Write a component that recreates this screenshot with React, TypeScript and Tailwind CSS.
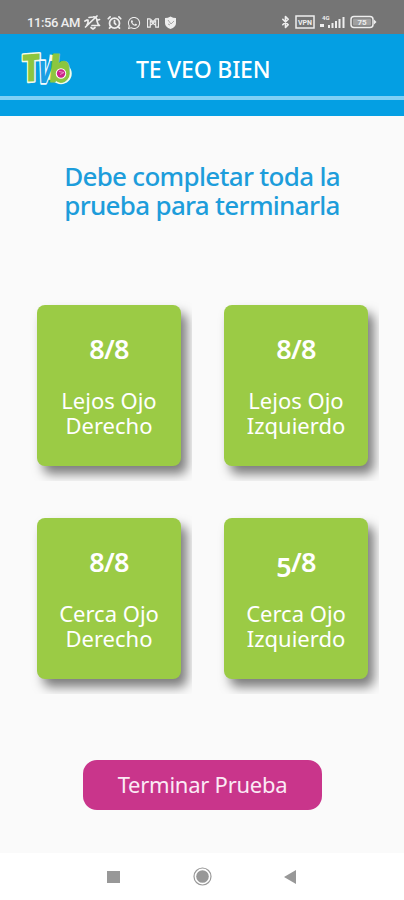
import { AlarmClock, Bluetooth } from "lucide-react";
import { FaWhatsapp } from "react-icons/fa";

type Test = { done: string; total: string; lines: [string, string]; low?: boolean };

const TESTS: Test[] = [
  { done: "8", total: "8", lines: ["Lejos Ojo", "Derecho"] },
  { done: "8", total: "8", lines: ["Lejos Ojo", "Izquierdo"] },
  { done: "8", total: "8", lines: ["Cerca Ojo", "Derecho"] },
  { done: "5", total: "8", lines: ["Cerca Ojo", "Izquierdo"], low: true },
];

function StatusBar() {
  return (
    <div className="flex h-[34px] items-end bg-[#757575] pr-[27px] pb-[4px] pl-[27px] text-[#eeeeee]">
      <span className="mr-[4px] w-[53px] whitespace-nowrap font-[Roboto,sans-serif] text-[13px] leading-[15px] font-medium tracking-[-0.4px]">
        11:56 AM
      </span>
      {/* muted bell */}
      <svg className="mr-[6px] h-[15px] w-[17px]" viewBox="0 0 17 15" fill="none" stroke="currentColor" strokeWidth="1.7" strokeLinecap="round" strokeLinejoin="round">
        <path d="M5 2.500l4-.5c3-.5 4 2 4 4l1 3 1.500 1.500H8M3 10l1-2 0-3M7 12.500l2 1.500 2-1.500M1.500 12L13 1M1 6l2-1M14 5l1.500-.5" />
      </svg>
      <AlarmClock className="mr-[5px] h-[15px] w-[15px]" strokeWidth={2.8} />
      <FaWhatsapp className="mr-[5px] h-[14px] w-[14px]" />
      <svg className="mr-[4px] mb-[2px] h-[10px] w-[14px]" viewBox="0 0 14 11" fill="none" stroke="currentColor" strokeWidth="1.2">
        <path d="M4 1H1v9h3V3l3 3 3-3v7h3V1h-3L7 4 4 1M4 8l3-2 3 2" />
      </svg>
      <svg className="mb-[1px] h-[13px] w-[13px]" viewBox="0 0 13 13">
        <path d="M1 2q3 0 5.500-1.500Q9 2 12 2v5q0 4-5.500 6Q1 11 1 7z" fill="currentColor" />
        <path d="M4 4l3 4 3-3M4 8l2 1" fill="none" stroke="#a8a8a8" />
      </svg>
      <div className="ml-auto flex items-center">
        <Bluetooth className="mr-[3px] h-[16px] w-[13px]" strokeWidth={3} />
        <svg className="mr-[5px] h-[14px] w-[20px]" viewBox="0 0 20 14">
          <rect x="1" y="1" width="18" height="12" fill="none" stroke="currentColor" strokeWidth="1.500" />
          <text x="10" y="9.500" textAnchor="middle" fontFamily="Roboto, sans-serif" fontSize="7" fontWeight="700" fill="currentColor">VPN</text>
        </svg>
        <svg className="mr-[5px] h-[14px] w-[25px]" viewBox="0 0 25 14" fill="currentColor">
          <text x="2" y="5" fontFamily="Roboto, sans-serif" fontSize="6" fontWeight="700">4G</text>
          <path d="M0 9h4v3H0zM8 10h2v3H8zM11.500 8h2v5h-2zM15 6h2v7h-2zM18.500 4h2v9h-2zM22.500 2h2v11h-2z" />
        </svg>
        <svg className="h-[14px] w-[27px]" viewBox="0 0 27 14">
          <rect x="1" y="1.500" width="22" height="11" rx="3" fill="none" stroke="currentColor" strokeWidth="1.500" />
          <rect x="3" y="3.500" width="18" height="7" rx="1" fill="#a0a0a0" />
          <path d="M24 4.500l2.500 2.500-2.500 2.500z" fill="currentColor" />
          <text x="12" y="10" textAnchor="middle" fontFamily="Roboto, sans-serif" fontSize="8" fontWeight="700" fill="currentColor">75</text>
        </svg>
      </div>
    </div>
  );
}

function Logo() {
  return (
    <svg className="h-[40px] w-[56px] overflow-visible" viewBox="0 0 56 40" fontFamily="'Open Sans', sans-serif" fontWeight="800" strokeLinejoin="round">
      {/* pale outline sits under each letter, the fill colour thickens it */}
      <g stroke="#f4fbea" strokeWidth="4.500">
        <circle cx="43" cy="28.500" r="8.500" />
        <path d="M36 10l-3 25" strokeWidth="8.500" />
      </g>
      <text transform="translate(4 37) rotate(-4) skewX(-4) scale(.82 1)" fontSize="38" fill="#8cc63f" stroke="#f4fbea" strokeWidth="3.200" paintOrder="stroke">T</text>
      <text transform="translate(18.500 38) skewX(-10) scale(.66 1)" fontSize="31" fill="#1c9fe3" stroke="#f4fbff" strokeWidth="3.400" paintOrder="stroke">V</text>
      <text transform="translate(30 36.500) skewX(-6) scale(.9 1)" fontSize="37" fill="#8cc63f" stroke="#8cc63f" strokeWidth="0.800">b</text>
      <circle cx="43" cy="28.500" r="7" fill="#fff" stroke="#8cc63f" strokeWidth="3.500" />
      <circle cx="43" cy="28.500" r="4.200" fill="#cc2489" />
      <path d="M41 26.500l5 1-4 2" fill="none" stroke="#f2a5d2" strokeWidth="0.800" />
    </svg>
  );
}

function TestCard({ test }: { test: Test }) {
  return (
    // The wrapper crops the shadow to a square edge
    <div className="h-[184px] w-[163px] overflow-hidden pt-[8px] pl-[8px]">
      <div className="h-[161px] w-[144px] rounded-[8px] bg-[#9bcb45] pt-[26px] pl-px text-center text-white shadow-[6px_8px_11px_rgba(0,0,0,0.5)]">
        <div className="text-[27px] leading-[35px] font-semibold tracking-[-0.8px]">
          <span className={test.low ? "relative top-[5px]" : undefined}>{test.done}</span>/{test.total}
        </div>
        <div className="mt-[22px] text-[22px] leading-[25px]">
          {test.lines[0]}
          <br />
          {test.lines[1]}
        </div>
      </div>
    </div>
  );
}

export default function App() {
  return (
    <div className="flex h-[900px] w-[404px] flex-col overflow-hidden bg-[#fafafa] font-['Noto_Sans',sans-serif]">
      <StatusBar />
      <header className="h-[82px] shrink-0 bg-[#049fe3]">
        <div className="flex h-[62px] items-center pl-[18px]">
          <Logo />
          <h1 className="ml-[62px] pt-[7px] text-[23px] leading-[30px] font-medium tracking-[-0.2px] whitespace-nowrap text-white">
            TE VEO BIEN
          </h1>
        </div>
        <div className="h-[4px] bg-[#7fd0f5]" />
      </header>

      <main className="flex flex-1 flex-col items-center">
        <h2 className="mt-[46px] text-center text-[26px] leading-[29px] font-medium tracking-[-0.7px] whitespace-nowrap text-[#1d9ddb]">
          Debe completar toda la
          <br />
          prueba para terminarla
        </h2>
        <div className="mt-[77px] ml-[3px] grid grid-cols-[163px_163px] gap-x-[24px] gap-y-[29px]">
          {TESTS.map((test) => (
            <TestCard key={test.lines.join(" ")} test={test} />
          ))}
        </div>
        <button className="mt-[66px] ml-px h-[50px] w-[239px] rounded-[14px] bg-[#c9358b] pb-[2px] text-[22px] tracking-[-0.25px] whitespace-nowrap text-[#fbeaf5]">
          Terminar Prueba
        </button>
      </main>

      <nav className="flex h-[47px] shrink-0 items-center bg-white pl-[107px]">
        <div className="h-[12px] w-[13px] bg-[#989898]" />
        <svg className="ml-[73px] h-[19px] w-[19px]" viewBox="0 0 19 19">
          <circle cx="9.500" cy="9.500" r="8.500" fill="none" stroke="#999" strokeWidth="1.200" />
          <circle cx="9.500" cy="9.500" r="6.300" fill="#989898" />
        </svg>
        <svg className="ml-[72px] h-[14px] w-[12px]" viewBox="0 0 12 14">
          <path d="M0 7L12 0v14z" fill="#989898" />
        </svg>
      </nav>
    </div>
  );
}
